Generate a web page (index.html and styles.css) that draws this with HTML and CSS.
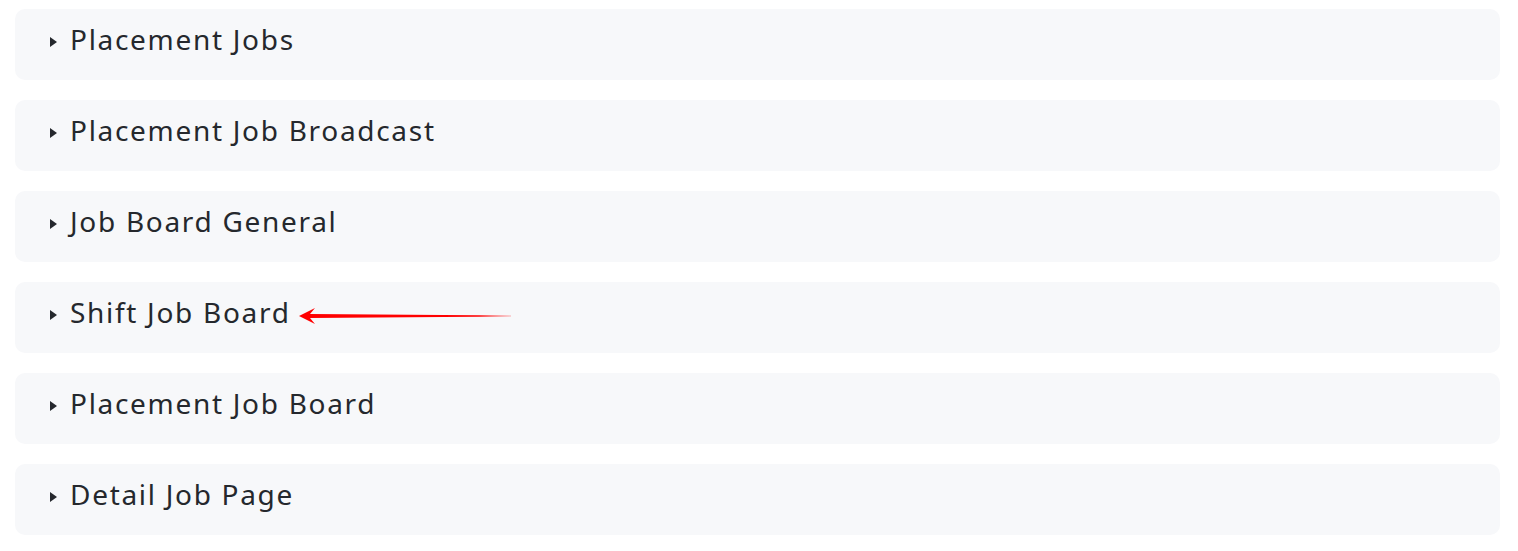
FILE: index.html
```html
<!DOCTYPE html>
<html lang="en">
  <head>
    <meta charset="utf-8" />
    <meta name="viewport" content="width=device-width, initial-scale=1" />
    <title>Job Pages</title>
    <link rel="stylesheet" href="styles.css">
  </head>
  <body>
    <main class="sections">
      <div class="section-item">
        <span class="caret"></span>
        <span class="section-title">Placement Jobs</span>
      </div>
      <div class="section-item">
        <span class="caret"></span>
        <span class="section-title">Placement Job Broadcast</span>
      </div>
      <div class="section-item">
        <span class="caret"></span>
        <span class="section-title">Job Board General</span>
      </div>
      <div class="section-item">
        <span class="caret"></span>
        <span class="section-title">Shift Job Board</span>
        <!-- annotation arrow -->
        <svg class="pointer" width="214" height="16" viewBox="0 0 214 16">
          <defs>
            <linearGradient id="tail" x1="0" y1="0" x2="1" y2="0">
              <stop offset="0" stop-color="#ff0000" />
              <stop offset="0.85" stop-color="#ff0000" />
              <stop offset="1" stop-color="#ff0000" stop-opacity="0.3" />
            </linearGradient>
          </defs>
          <path d="M0 8 L16 0 L11 6 L212 7.6 L212 8.4 L11 10 L16 16 Z" fill="url(#tail)" />
        </svg>
      </div>
      <div class="section-item">
        <span class="caret"></span>
        <span class="section-title">Placement Job Board</span>
      </div>
      <div class="section-item">
        <span class="caret"></span>
        <span class="section-title">Detail Job Page</span>
      </div>
    </main>
  </body>
</html>
```

FILE: styles.css
```css
:root {
  --bg-color: #ffffff;
  --card-color: #f7f8fa;
  --text-color: #25282d;
  --font-primary: "Noto Sans", "Open Sans", sans-serif;
}

*,
*::before,
*::after {
  margin: 0;
  padding: 0;
  box-sizing: border-box;
}

html,
body {
  background-color: var(--bg-color);
  color: var(--text-color);
  font-family: var(--font-primary);
}

.sections {
  display: flex;
  flex-direction: column;
  gap: 20px;
  padding: 9px 18px 0 15px;
}

.section-item {
  position: relative;
  display: flex;
  align-items: center;
  height: 71px;
  padding: 0 0 11px 35px;
  background-color: var(--card-color);
  border-radius: 10px;
}

.caret {
  width: 0;
  height: 0;
  margin-right: 13px;
  margin-top: 6px;
  border-top: 5px solid transparent;
  border-bottom: 5px solid transparent;
  border-left: 7px solid var(--text-color);
}

.section-title {
  font-size: 28px;
  line-height: 1;
  letter-spacing: 1.7px;
}

.pointer {
  position: absolute;
  left: 284px;
  top: 26px;
}
```
